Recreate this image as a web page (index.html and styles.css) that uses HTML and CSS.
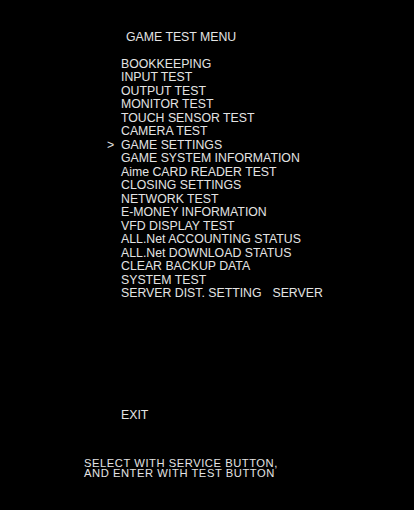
FILE: index.html
```html
<!DOCTYPE html>
<html>
<head>
<meta charset="utf-8">
<link rel="stylesheet" href="styles.css">
</head>
<body>
<div class="screen">
  <div class="title">GAME TEST MENU</div>
  <ul class="menu">
    <li>BOOKKEEPING</li>
    <li>INPUT TEST</li>
    <li>OUTPUT TEST</li>
    <li>MONITOR TEST</li>
    <li>TOUCH SENSOR TEST</li>
    <li>CAMERA TEST</li>
    <li class="selected">GAME SETTINGS</li>
    <li>GAME SYSTEM INFORMATION</li>
    <li>Aime CARD READER TEST</li>
    <li>CLOSING SETTINGS</li>
    <li>NETWORK TEST</li>
    <li>E-MONEY INFORMATION</li>
    <li>VFD DISPLAY TEST</li>
    <li>ALL.Net ACCOUNTING STATUS</li>
    <li>ALL.Net DOWNLOAD STATUS</li>
    <li>CLEAR BACKUP DATA</li>
    <li>SYSTEM TEST</li>
    <li>SERVER DIST. SETTING <span class="value">SERVER</span></li>
  </ul>
  <div class="exit">EXIT</div>
  <div class="help">
    <div>SELECT WITH SERVICE BUTTON,</div>
    <div>AND ENTER WITH TEST BUTTON</div>
  </div>
</div>
</body>
</html>
```
FILE: styles.css
```css
html, body {
  margin: 0;
  padding: 0;
  background: #000;
}
.screen {
  width: 414px;
  height: 510px;
  background: #000;
  color: #e4e4e4;
  font-family: "Liberation Sans", Arial, sans-serif;
  font-size: 12.3px;
  line-height: 13.5px;
  display: flex;
  flex-direction: column;
  padding-top: 31px;
  box-sizing: border-box;
}
.title {
  padding-left: 126px;
}
.menu {
  list-style: none;
  margin: 13px 0 0 0;
  padding: 0 0 0 121px;
}
.menu li {
  position: relative;
}
.menu li.selected::before {
  content: ">";
  position: absolute;
  left: -14px;
}
.value {
  margin-left: 7.5px;
}
.exit {
  margin-top: 108.5px;
  padding-left: 121px;
}
.help {
  margin-top: 35px;
  padding-left: 84px;
  font-size: 11.2px;
  letter-spacing: 0.55px;
  line-height: 10.7px;
}
```
